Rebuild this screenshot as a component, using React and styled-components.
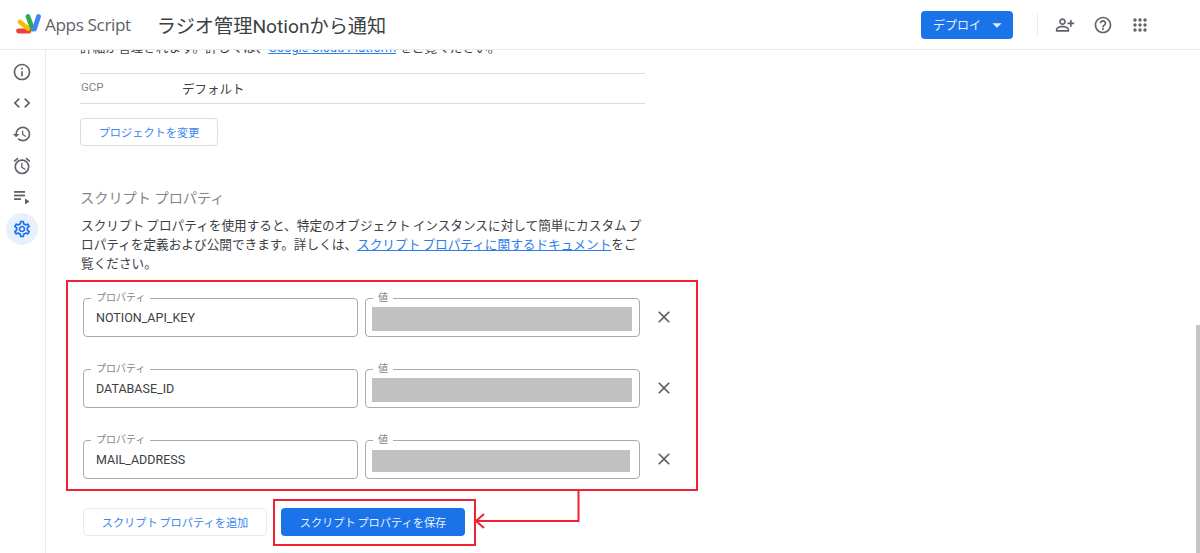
import React from "react";
import styled, { createGlobalStyle } from "styled-components";
import { MdInfoOutline, MdCode, MdHistory, MdAlarm, MdOutlineSettings, MdOutlinePersonAddAlt, MdHelpOutline, MdClose, MdArrowDropDown } from "react-icons/md";

const Global = createGlobalStyle`
  html, body { margin: 0; padding: 0; height: 553px; overflow: hidden; background: #fff; }
  body { font-family: Roboto, "Noto Sans CJK JP", sans-serif; color: #3c4043; }
  * { box-sizing: border-box; }
`;
const Page = styled.div`
  position: relative; width: 1200px; height: 553px; overflow: hidden;
  display: flex; flex-direction: column;
`;
const Header = styled.header`
  height: 50px; flex: none; display: flex; align-items: center; padding-left: 15px;
  border-bottom: 1px solid #e8eaed; background: #fff; position: relative; z-index: 2;
`;
const BrandName = styled.span`
  font: 400 17.2px "Open Sans", Roboto, sans-serif; color: #5f6368; margin-left: 4px; letter-spacing: -0.4px; white-space: nowrap;
`;
const ProjectTitle = styled.h1`
  font: 400 19.2px Roboto, "Noto Sans CJK JP", sans-serif; color: #3c4043; margin: 0 0 0 26px; white-space: nowrap;
`;
const HeaderRight = styled.div`
  margin-left: auto; display: flex; align-items: center; padding-right: 50px; color: #5f6368;
`;
const DeployButton = styled.button`
  width: 92px; height: 28px; border: 0; border-radius: 4px; background: #1a73e8; color: #e8f0fe;
  font: 400 12px Roboto, "Noto Sans CJK JP", sans-serif; display: flex; align-items: center; padding: 0 0 0 12px; gap: 5px;
`;
const Divider = styled.div`
  width: 1px; height: 22px; background: #e8eaed; margin: 0 17px 0 24px;
`;
const IconGroup = styled.div`
  display: flex; align-items: center; gap: 17.5px; font-size: 20px; color: #5f6368;
  svg { display: block; }
`;
const Body = styled.div`
  flex: 1; display: flex; min-height: 0;
`;
const Sidebar = styled.nav`
  width: 46px; flex: none; border-right: 1px solid #e8eaed; padding-top: 6px;
  display: flex; flex-direction: column; align-items: center; padding-right: 1px;
`;
const NavItem = styled.div`
  width: 32px; height: ${p => p.$h || 31.4}px; display: flex; align-items: center; justify-content: center;
  border-radius: 50%; font-size: 20px; color: ${p => p.$active ? "#1a73e8" : "#5f6368"};
  background: ${p => p.$active ? "#e8f0fe" : "transparent"};
  svg { display: block; }
`;
const Main = styled.main`
  flex: 1; min-width: 0; padding-left: 34px; overflow: hidden; position: relative;
`;
const Column = styled.div`
  width: 565px;
`;
const ClippedLine = styled.p`
  margin: -12px 0 0; height: 19px; font-size: 12.65px; line-height: 19px; white-space: nowrap; color: #3c4043;
`;
const GcpRow = styled.div`
  margin-top: 16px; height: 31px; border-top: 1px solid #dadce0; border-bottom: 1px solid #dadce0;
  display: flex; align-items: center; font-size: 12.5px;
`;
const GcpLabel = styled.span`
  width: 102px; font-size: 11.5px; color: #80868b; margin-top: -3px; padding-left: 1px;
`;
const OutlineButton = styled.button`
  height: 28px; border: 1px solid ${p => p.$light ? "#e8eaed" : "#dadce0"}; border-radius: 4px; background: #fff; color: #3d87ee;
  font: 400 11.2px Roboto, "Noto Sans CJK JP", sans-serif; padding: 0; width: ${p => p.$w}px;
  white-space: nowrap; word-spacing: -1px;
`;
const ChangeWrap = styled.div`
  margin-top: 14px;
`;
const SectionTitle = styled.h2`
  font: 400 14.2px Roboto, "Noto Sans CJK JP", sans-serif; color: #80868b; margin: 42px 0 0; line-height: 20px;
`;
const Description = styled.p`
  width: 565px; margin: 8px 0 0; padding-left: 1px; font-size: 12.65px; line-height: 19px; color: #3c4043; word-spacing: -1px;
`;
const DocLink = styled.a`
  color: #2b7de9; text-decoration: underline;
`;
const Rows = styled.div`
  margin-top: 25px; padding-left: 3px; display: flex; flex-direction: column; gap: 32px;
`;
const Row = styled.div`
  display: flex; align-items: center; gap: 7px; width: 640px;
`;
const Field = styled.div`
  position: relative; flex: none; width: 275px; height: 39px; border: 1px solid #a6abb0; border-radius: 4px;
  display: flex; align-items: center; padding: 0 6px; font-size: 12.5px; color: #3c4043;
`;
const KeyText = styled.span`
  padding-left: 6px;
`;
const FieldLabel = styled.span`
  position: absolute; top: -8px; left: 7px; background: #fff; padding: 0 5px; font-size: 10px; line-height: 14px; color: #80868b;
`;
const Mask = styled.div`
  width: ${p => p.$w || 260}px; height: ${p => p.$h || 24}px; background: #c1c1c1; margin-top: 2px;
`;
const RemoveButton = styled.div`
  font-size: 20px; color: #5f6368; margin: -2px 0 0 7px; display: flex;
`;
const Actions = styled.div`
  margin-top: 29px; padding-left: 3px; display: flex; gap: 14px; width: 640px;
`;
const PrimaryButton = styled.button`
  height: 28px; width: 184px; border: 0; border-radius: 4px; background: #1a73e8; color: #e8f0fe;
  font: 400 11.2px Roboto, "Noto Sans CJK JP", sans-serif; padding: 0; white-space: nowrap; word-spacing: -1px;
`;
const Annotation = styled.div`
  position: absolute; left: ${p => p.$x}px; top: ${p => p.$y}px; width: ${p => p.$w}px; height: ${p => p.$h}px;
  border: 2px solid #ee2233; pointer-events: none; z-index: 1;
`;
const ArrowLayer = styled.svg`
  position: absolute; left: 470px; top: 488px; z-index: 1; pointer-events: none;
`;
const ScrollThumb = styled.div`
  position: absolute; right: 0; top: 325px; width: 4px; height: 228px; background: #c6c6c6; z-index: 1;
`;

const QueueIcon = () => (
  <svg width="20" height="20" viewBox="0 0 20 20" fill="#5f6368">
    <rect x="2" y="4" width="11" height="1.8" />
    <rect x="2" y="7.6" width="11" height="1.8" />
    <rect x="2" y="11.2" width="7" height="1.8" />
    <path d="M13 11.5v6l4.5-3z" />
  </svg>
);

const AppsGrid = () => (
  <svg width="20" height="20" viewBox="0 0 20 20" fill="#5f6368">
    {[5, 10, 15].flatMap(y => [5, 10, 15].map(x => <circle key={`${x}-${y}`} cx={x} cy={y} r="1.7" />))}
  </svg>
);

const Logo = () => (
  <svg width="26" height="22" viewBox="0 0 26 22" fill="none" strokeWidth="4.8" strokeLinecap="round">
    <path d="M3.5 17H14" stroke="#ea4335" />
    <path d="M5 8L13 14.5" stroke="#fbbc04" />
    <path d="M13 2.5L17.5 15" stroke="#34a853" />
    <path d="M23.5 2.5L19.5 15" stroke="#4285f4" />
  </svg>
);

const rows = [
  { key: "NOTION_API_KEY", w: 260, h: 24 },
  { key: "DATABASE_ID", w: 260, h: 24 },
  { key: "MAIL_ADDRESS", w: 258, h: 22 },
];

export default function App() {
  return (
    <Page>
      <Global />
      <Header>
        <Logo />
        <BrandName>Apps Script</BrandName>
        <ProjectTitle>ラジオ管理Notionから通知</ProjectTitle>
        <HeaderRight>
          <DeployButton>デプロイ<MdArrowDropDown size={22} /></DeployButton>
          <Divider />
          <IconGroup>
            <MdOutlinePersonAddAlt />
            <MdHelpOutline />
            <AppsGrid />
          </IconGroup>
        </HeaderRight>
      </Header>
      <Body>
        <Sidebar>
          <NavItem><MdInfoOutline /></NavItem>
          <NavItem><MdCode /></NavItem>
          <NavItem><MdHistory /></NavItem>
          <NavItem><MdAlarm /></NavItem>
          <NavItem><QueueIcon /></NavItem>
          <NavItem $active $h={32}><MdOutlineSettings /></NavItem>
        </Sidebar>
        <Main>
          <Column>
            <ClippedLine>詳細が管理されます。詳しくは、<DocLink>Google Cloud Platform</DocLink> をご覧ください。</ClippedLine>
            <GcpRow><GcpLabel>GCP</GcpLabel>デフォルト</GcpRow>
            <ChangeWrap><OutlineButton $w={138}>プロジェクトを変更</OutlineButton></ChangeWrap>
            <SectionTitle>スクリプト プロパティ</SectionTitle>
            <Description>
              スクリプト プロパティを使用すると、特定のオブジェクト インスタンスに対して簡単にカスタム プロパティを定義および公開できます。詳しくは、<DocLink>スクリプト プロパティに関するドキュメント</DocLink>をご覧ください。
            </Description>
            <Rows>
              {rows.map(r => (
                <Row key={r.key}>
                  <Field><FieldLabel>プロパティ</FieldLabel><KeyText>{r.key}</KeyText></Field>
                  <Field><FieldLabel>値</FieldLabel><Mask $w={r.w} $h={r.h} /></Field>
                  <RemoveButton><MdClose /></RemoveButton>
                </Row>
              ))}
            </Rows>
            <Actions>
              <OutlineButton $w={184} $light>スクリプト プロパティを追加</OutlineButton>
              <PrimaryButton>スクリプト プロパティを保存</PrimaryButton>
            </Actions>
          </Column>
        </Main>
      </Body>
      <Annotation $x={66} $y={280} $w={632} $h={211} />
      <Annotation $x={273} $y={499} $w={203} $h={47} />
      <ArrowLayer width="120" height="50" viewBox="0 0 120 50" fill="none" stroke="#ee2233" strokeWidth="2">
        <path d="M108.5 2V33H7" />
        <path d="M14 26L6 33L14 40" />
      </ArrowLayer>
      <ScrollThumb />
    </Page>
  );
}
